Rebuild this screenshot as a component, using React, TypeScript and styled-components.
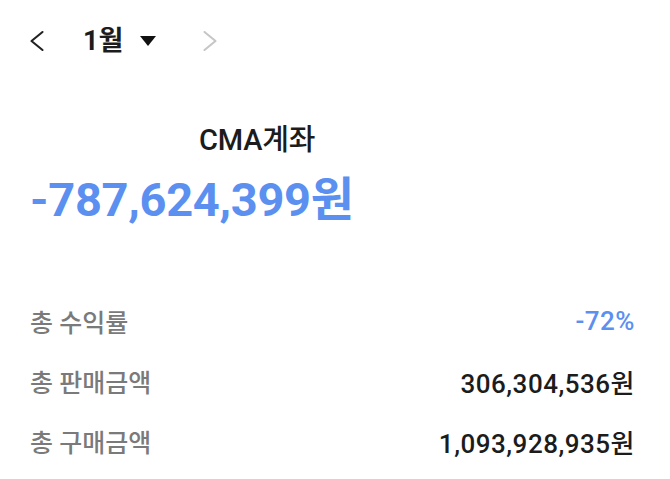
import React, { FunctionComponent } from "react";
import styled, { createGlobalStyle } from "styled-components";

const GlobalStyle = createGlobalStyle`
  html, body {
    margin: 0;
    padding: 0;
    background: #ffffff;
  }
  body {
    font-family: Roboto, "Noto Sans CJK KR", sans-serif;
    color: #1f1f1f;
  }
`;

const StyledPage = styled.div`
  width: 670px;
  height: 479px;
  box-sizing: border-box;
  padding: 22px 35px 0 30px;
  display: flex;
  flex-direction: column;
`;

const StyledMonthBar = styled.div`
  display: flex;
  align-items: center;
  height: 38px;
`;

const StyledArrow = styled.button<{ $disabled?: boolean }>`
  border: 0;
  background: none;
  padding: 0;
  width: 14px;
  height: 24px;
  display: flex;
  align-items: center;
  justify-content: center;
  color: ${({ $disabled }) => ($disabled ? "#c6c6c6" : "#222222")};
`;

const StyledMonth = styled.div`
  margin-left: 39px;
  display: flex;
  align-items: center;
  gap: 17px;
  font-size: 27px;
  line-height: 38px;
  font-weight: 700;
  color: #1c1c1c;
`;

const StyledCaret = styled.span`
  width: 0;
  height: 0;
  border-left: 8px solid transparent;
  border-right: 8px solid transparent;
  border-top: 10px solid #111111;
  margin-right: 47px;
`;

const StyledAccount = styled.div`
  margin-top: 63px;
  padding-left: 169px;
  font-size: 29px;
  line-height: 34px;
  font-weight: 500;
  color: #1c1c1c;
  letter-spacing: -0.2px;
`;

const StyledBalance = styled.div`
  margin-top: 15px;
  font-size: 47px;
  line-height: 56px;
  font-weight: 700;
  color: #5b8ff0;
  letter-spacing: -0.3px;
`;

const StyledSummary = styled.div`
  margin-top: 78px;
  display: flex;
  flex-direction: column;
  gap: 30px;
`;

const StyledRow = styled.div`
  display: flex;
  align-items: center;
  justify-content: space-between;
  height: 30px;
`;

const StyledLabel = styled.span`
  font-size: 25px;
  font-weight: 500;
  color: #7a7a7a;
`;

const StyledValue = styled.span<{ $accent?: boolean }>`
  font-size: 26px;
  font-weight: 500;
  letter-spacing: 0.5px;
  color: ${({ $accent }) => ($accent ? "#5b8ff0" : "#1c1c1c")};
`;

const Chevron: FunctionComponent<{ dir: "left" | "right" }> = ({ dir }) => (
  <svg width="14" height="24" viewBox="0 0 14 24" fill="none">
    <path
      d={dir === "left" ? "M12.5 3 L1.5 12 L12.5 21" : "M1.5 3 L12.5 12 L1.5 21"}
      stroke="currentColor"
      strokeWidth="2.1"
      strokeLinecap="round"
      strokeLinejoin="round"
    />
  </svg>
);

const rows = [
  { label: "총 수익률", value: "-72%", accent: true },
  { label: "총 판매금액", value: "306,304,536원" },
  { label: "총 구매금액", value: "1,093,928,935원" },
];

const App: FunctionComponent = () => {
  return (
    <>
      <GlobalStyle />
      <StyledPage>
        <StyledMonthBar>
          <StyledArrow>
            <Chevron dir="left" />
          </StyledArrow>
          <StyledMonth>
            1월
            <StyledCaret />
          </StyledMonth>
          <StyledArrow $disabled>
            <Chevron dir="right" />
          </StyledArrow>
        </StyledMonthBar>

        <StyledAccount>CMA계좌</StyledAccount>
        <StyledBalance>-787,624,399원</StyledBalance>

        <StyledSummary>
          {rows.map((row) => (
            <StyledRow key={row.label}>
              <StyledLabel>{row.label}</StyledLabel>
              <StyledValue $accent={row.accent}>{row.value}</StyledValue>
            </StyledRow>
          ))}
        </StyledSummary>
      </StyledPage>
    </>
  );
};

export default App;
